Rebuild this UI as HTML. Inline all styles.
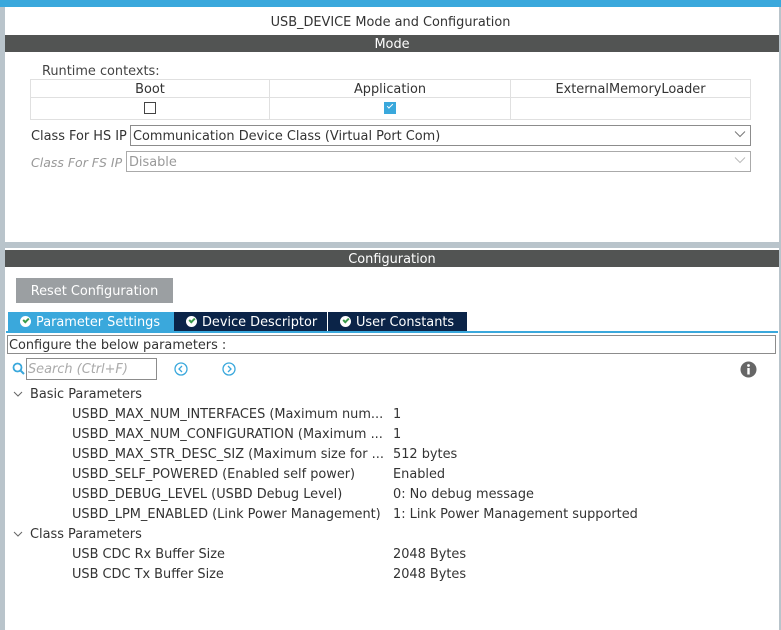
<!DOCTYPE html>
<html><head><meta charset="utf-8"><style>
*{margin:0;padding:0;box-sizing:border-box}
body{width:781px;height:630px;background:#b9c4cb;position:relative;overflow:hidden;font-family:"DejaVu Sans","Liberation Sans",sans-serif;font-size:12.9px;color:#333}
.a{position:absolute;white-space:nowrap}
.panel{position:absolute;background:#fff}
.hdr{position:absolute;left:5px;width:774px;background:#525453;color:#fff;text-align:center;height:17px;line-height:19px}
.cell{position:absolute;border:1px solid #e0e0e0;text-align:center;line-height:19px}
.sel{position:absolute;border:1px solid #8c8c8c;height:21px;line-height:21px;padding-left:2px}
.row{position:absolute;left:72px;line-height:20px}
.val{position:absolute;left:393px;line-height:20px}
.tab{position:absolute;top:312px;height:20px;line-height:21px;color:#fff;padding-left:8px}
.ck{display:inline-block;width:11px;height:11px;border-radius:50%;background:#fff;vertical-align:-1px;margin-right:5px;position:relative}
.ck:after{content:"";position:absolute;left:3px;top:2px;width:4px;height:2px;border-left:2px solid #3a9a4a;border-bottom:2px solid #3a9a4a;transform:rotate(-45deg)}
</style></head><body>
<div class="a" style="left:0;top:0;width:781px;height:7px;background:#3aa8dc"></div>
<div class="panel" style="left:5px;top:7px;width:774px;height:235px"></div>
<div class="panel" style="left:5px;top:248px;width:774px;height:382px"></div>
<div class="a" style="left:0;top:14px;width:781px;text-align:center;line-height:17px">USB_DEVICE Mode and Configuration</div>
<div class="hdr" style="top:35px">Mode</div>
<div class="a" style="left:42px;top:64px;line-height:16px;color:#444">Runtime contexts:</div>
<div class="cell" style="left:30px;top:79px;width:240px;height:19px">Boot</div>
<div class="cell" style="left:269px;top:79px;width:242px;height:19px">Application</div>
<div class="cell" style="left:510px;top:79px;width:241px;height:19px">ExternalMemoryLoader</div>
<div class="cell" style="left:30px;top:97px;width:240px;height:23px"></div>
<div class="cell" style="left:269px;top:97px;width:242px;height:23px"></div>
<div class="cell" style="left:510px;top:97px;width:241px;height:23px"></div>
<div class="a" style="left:144px;top:102px;width:12px;height:12px;border:1px solid #444"></div>
<div class="a" style="left:384px;top:102px;width:12px;height:12px;background:#3aa8dc"><div style="position:absolute;left:3px;top:2px;width:6px;height:3px;border-left:1.5px solid #fff;border-bottom:1.5px solid #fff;transform:rotate(-45deg)"></div></div>
<div class="a" style="left:31px;top:128px;line-height:17px">Class For HS IP</div>
<div class="sel" style="left:130px;top:125px;width:621px">Communication Device Class (Virtual Port Com)</div>
<svg class="a" style="left:734px;top:130px" width="12" height="8"><path d="M1 1.5L6 6.5L11 1.5" fill="none" stroke="#777" stroke-width="1"/></svg>
<div class="a" style="left:31px;top:154px;line-height:17px;color:#999;font-style:italic;font-size:12.5px">Class For FS IP</div>
<div class="sel" style="left:126px;top:151px;width:625px;border-color:#aaa;color:#999">Disable</div>
<svg class="a" style="left:734px;top:156px" width="12" height="8"><path d="M1 1.5L6 6.5L11 1.5" fill="none" stroke="#bbb" stroke-width="1"/></svg>
<div class="hdr" style="top:250px">Configuration</div>
<div class="a" style="left:16px;top:278px;width:157px;height:25px;background:#9b9fa2;color:#fff;text-align:center;line-height:27px">Reset Configuration</div>
<div class="tab" style="left:8px;width:166px;background:#3aa8dc;padding-left:12px"><span class="ck"></span>Parameter Settings</div>
<div class="tab" style="left:174px;width:153px;background:#0b2448;padding-left:12px"><span class="ck"></span>Device Descriptor</div>
<div class="tab" style="left:328px;width:139px;background:#0b2448;padding-left:12px"><span class="ck"></span>User Constants</div>
<div class="a" style="left:6px;top:331px;width:772px;height:2px;background:#3aa8dc"></div>
<div class="a" style="left:7px;top:335px;width:769px;height:19px;border:1px solid #8c8c8c;line-height:19px;padding-left:1px">Configure the below parameters :</div>
<svg class="a" style="left:12px;top:362px" width="14" height="14"><circle cx="5.5" cy="5.5" r="4" fill="none" stroke="#3aa8dc" stroke-width="1.8"/><path d="M8.5 8.5L12 12" stroke="#3aa8dc" stroke-width="2"/></svg>
<div class="a" style="left:26px;top:358px;width:131px;height:22px;border:1px solid #8c8c8c;line-height:21px;padding-left:1px;color:#aaa;font-style:italic">Search (Ctrl+F)</div>
<svg class="a" style="left:174px;top:362px" width="14" height="14"><circle cx="7" cy="7" r="6" fill="none" stroke="#3aa8dc" stroke-width="1.3"/><path d="M8 4L5 7L8 10" fill="none" stroke="#3aa8dc" stroke-width="1.3"/></svg>
<svg class="a" style="left:222px;top:362px" width="14" height="14"><circle cx="7" cy="7" r="6" fill="none" stroke="#3aa8dc" stroke-width="1.3"/><path d="M6 4L9 7L6 10" fill="none" stroke="#3aa8dc" stroke-width="1.3"/></svg>
<svg class="a" style="left:740px;top:361px" width="17" height="17"><circle cx="8.5" cy="8.5" r="8" fill="#666"/><circle cx="8.5" cy="4.5" r="1.4" fill="#fff"/><rect x="7.3" y="7" width="2.4" height="6.5" fill="#fff"/></svg>
<svg class="a" style="left:13px;top:390px" width="10" height="8"><path d="M1 2L5 6L9 2" fill="none" stroke="#666" stroke-width="1"/></svg>
<div class="a" style="left:30px;top:385px;line-height:20px">Basic Parameters</div>
<div class="row" style="top:405px">USBD_MAX_NUM_INTERFACES (Maximum num...</div><div class="val" style="top:405px">1</div>
<div class="row" style="top:425px">USBD_MAX_NUM_CONFIGURATION (Maximum ...</div><div class="val" style="top:425px">1</div>
<div class="row" style="top:445px">USBD_MAX_STR_DESC_SIZ (Maximum size for ...</div><div class="val" style="top:445px">512 bytes</div>
<div class="row" style="top:465px">USBD_SELF_POWERED (Enabled self power)</div><div class="val" style="top:465px">Enabled</div>
<div class="row" style="top:485px">USBD_DEBUG_LEVEL (USBD Debug Level)</div><div class="val" style="top:485px">0: No debug message</div>
<div class="row" style="top:505px">USBD_LPM_ENABLED (Link Power Management)</div><div class="val" style="top:505px">1: Link Power Management supported</div>
<svg class="a" style="left:13px;top:530px" width="10" height="8"><path d="M1 2L5 6L9 2" fill="none" stroke="#666" stroke-width="1"/></svg>
<div class="a" style="left:30px;top:525px;line-height:20px">Class Parameters</div>
<div class="row" style="top:545px">USB CDC Rx Buffer Size</div><div class="val" style="top:545px">2048 Bytes</div>
<div class="row" style="top:565px">USB CDC Tx Buffer Size</div><div class="val" style="top:565px">2048 Bytes</div>
</body></html>
